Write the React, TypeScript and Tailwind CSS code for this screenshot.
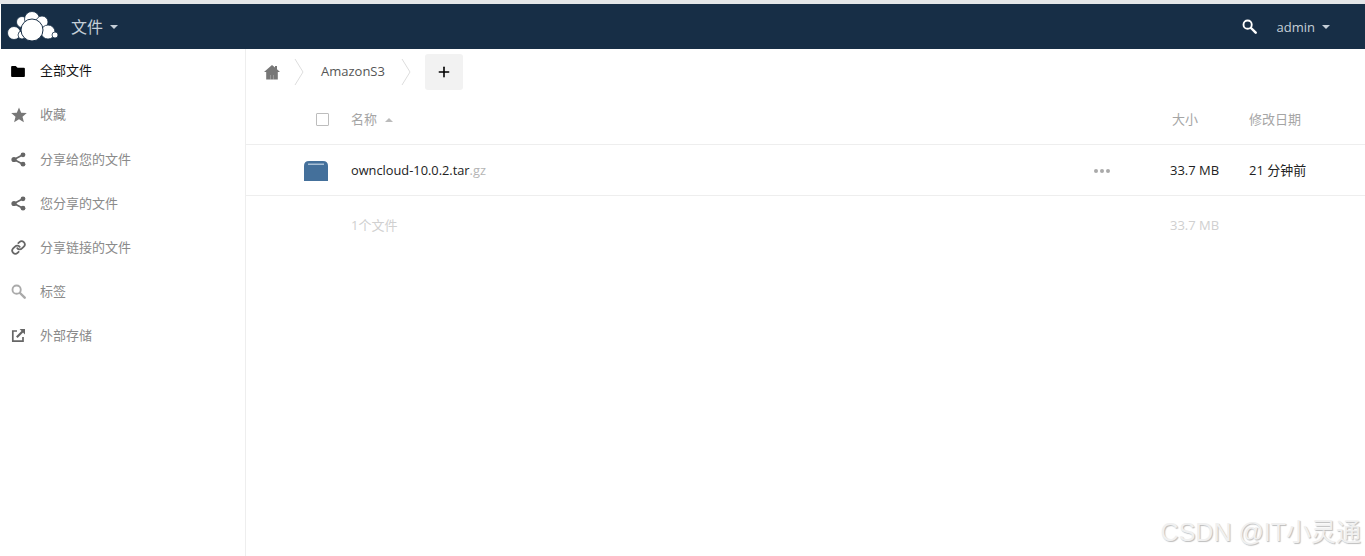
import React from "react";
import { Link as LinkIcon, Plus } from "lucide-react";

const Caret = ({ className }: { className: string }) => (
  <span className={`inline-block h-0 w-0 border-x-[4px] border-x-transparent ${className}`} />
);

const Logo = () => (
  <svg width="52" height="32" viewBox="7 11 52 32" className="block">
    <g fill="#fff" stroke="#172e46" strokeWidth="0.8">
      <circle cx="22" cy="22" r="5.5" />
      <circle cx="32" cy="19" r="7.5" />
      <circle cx="42" cy="22" r="6" />
      <circle cx="14" cy="33" r="6.5" />
      <circle cx="48" cy="32" r="7" />
      <circle cx="55" cy="35" r="3" />
      <circle cx="22" cy="35" r="4" />
      <circle cx="32" cy="30" r="11" strokeWidth="1" />
    </g>
  </svg>
);

const FolderIcon = () => (
  <svg width="14" height="11" viewBox="0 0 15 12" fill="#000">
    <path d="M0 1q0-1 1-1h4l2 2h7q1 0 1 1v8q0 1-1 1H1q-1 0-1-1z" />
  </svg>
);

const StarIcon = () => (
  <svg width="16" height="16" viewBox="0 0 16 16" fill="#777">
    <path d="M8 0.5l2.2 5.2 5.6.4-4.3 3.6 1.4 5.5L8 12.2l-4.9 3 1.4-5.5L.2 6.1l5.6-.4z" />
  </svg>
);

const ShareIcon = () => (
  <svg width="15" height="15" viewBox="0 0 15 15" fill="#666" stroke="#666">
    <path d="M12 2.8L3 7.5l9 4.7" fill="none" strokeWidth="1.7" />
    <circle cx="12" cy="2.8" r="2.4" stroke="none" />
    <circle cx="3" cy="7.5" r="2.6" stroke="none" />
    <circle cx="12" cy="12.2" r="2.4" stroke="none" />
  </svg>
);

const SearchIcon = ({ color, size }: { color: string; size: number }) => (
  <svg width={size} height={size} viewBox="0 0 16 16" fill="none" stroke={color}>
    <circle cx="6" cy="6" r="4.4" strokeWidth="2" />
    <path d="M9.6 9.6l5 5" strokeWidth="2.6" strokeLinecap="round" />
  </svg>
);

const ExternalIcon = () => (
  <svg width="15" height="15" viewBox="0 0 15 15" fill="none" stroke="#666">
    <path d="M6 3H1.8v10.2H12V9" strokeWidth="1.7" />
    <path d="M5.8 9.2L12 3" strokeWidth="2.2" />
    <path d="M8.6 1h5.4v5.4z" fill="#666" stroke="none" />
  </svg>
);

const HomeIcon = () => (
  <svg width="16" height="15" viewBox="0 0 16 15" fill="#777">
    <path d="M8 0l3 2.6V1h2v3.3L16 7h-2.2v7.5H9.5V10h-3v4.5H2.2V7H0z" />
    <path d="M6.5 10h3v4.5h-3z" />
  </svg>
);

const Chevron = ({ className }: { className: string }) => (
  <svg width="10" height="26" viewBox="0 0 10 26" fill="none" stroke="#ddd" className={className}>
    <path d="M1 0l8 13-8 13" />
  </svg>
);

const navItems = [
  { label: "全部文件", icon: <FolderIcon />, active: true },
  { label: "收藏", icon: <StarIcon /> },
  { label: "分享给您的文件", icon: <ShareIcon /> },
  { label: "您分享的文件", icon: <ShareIcon /> },
  { label: "分享链接的文件", icon: <LinkIcon size={15} stroke="#666" strokeWidth={2.8} /> },
  { label: "标签", icon: <SearchIcon color="#aaa" size={15} /> },
  { label: "外部存储", icon: <ExternalIcon /> },
];

export default function App() {
  return (
    <div className="relative flex h-[556px] w-[1365px] flex-col overflow-hidden bg-white pt-[4px] font-['Open_Sans','Noto_Sans_CJK_SC',sans-serif] text-[13px]">
      <div className="absolute inset-x-0 top-0 h-[4px] bg-[#e4e6e8]" />
      <header className="ml-px flex h-[45px] shrink-0 items-center bg-[#172e46] pl-[6px] pr-[35px] text-[#c5ced7]">
        <Logo />
        <span className="ml-[12px] pt-px text-[16px] leading-none">文件</span>
        <Caret className="ml-[7px] border-t-[4px] border-t-[#c5ced7]" />
        <span className="ml-auto">
          <SearchIcon color="#fff" size={15} />
        </span>
        <span className="ml-[20px] pt-[2px] text-[13px] leading-none">admin</span>
        <Caret className="ml-[7px] border-t-[4px] border-t-[#c5ced7]" />
      </header>

      <div className="flex min-h-0 flex-1">
        <nav className="w-[246px] shrink-0 border-r border-[#eeeeee]">
          {navItems.map((item) => (
            <div key={item.label} className="flex h-[44.15px] items-center pl-[11px]">
              <span className="flex w-[29px] shrink-0">{item.icon}</span>
              <span className={`text-[13px] ${item.active ? "text-[#111]" : "text-[#8a8a8a]"}`}>{item.label}</span>
            </div>
          ))}
        </nav>

        <main className="min-w-0 flex-1">
          <div className="flex h-[48px] items-center pb-[2px] pl-[18px]">
            <HomeIcon />
            <Chevron className="ml-[14px]" />
            <span className="ml-[17px] text-[13px] font-medium text-[#555]">AmazonS3</span>
            <Chevron className="ml-[16px]" />
            <button className="ml-[14px] flex h-[36px] w-[38px] items-center justify-center rounded-[3px] bg-[#f2f2f2]">
              <Plus size={16} stroke="#000" strokeWidth={2.4} />
            </button>
          </div>

          <div className="flex h-[48px] items-center border-b border-[#eeeeee] pb-[2px] text-[#a5a5a5]">
            <span className="ml-[70px] h-[13px] w-[13px] rounded-[1px] border border-[#bdbdbd]" />
            <span className="ml-[22px] text-[13px]">名称</span>
            <Caret className="ml-[8px] border-b-[4px] border-b-[#bbb]" />
            <span className="flex-1" />
            <span className="w-[77px] text-[13px]">大小</span>
            <span className="w-[116px] text-[13px]">修改日期</span>
          </div>

          <div className="flex h-[51px] items-center border-b border-[#eeeeee] pt-px">
            <svg width="26" height="22" viewBox="0 0 26 22" className="ml-[57px] shrink-0">
              <path d="M1 6q0-5 5-5h14q5 0 5 5v15H1z" fill="#44709b" />
              <path d="M5 3.5h16v1.5H5z" fill="#a9c0d6" />
            </svg>
            <span className="ml-[22px] flex-1 text-[12.8px] text-[#222]">
              owncloud-10.0.2.tar<span className="text-[#b5b5b5]">.gz</span>
            </span>
            <span className="flex w-[76px] shrink-0 gap-[2px]">
              <i className="h-[4px] w-[4px] rounded-full bg-[#aaa]" />
              <i className="h-[4px] w-[4px] rounded-full bg-[#aaa]" />
              <i className="h-[4px] w-[4px] rounded-full bg-[#aaa]" />
            </span>
            <span className="w-[79px] shrink-0 text-[13px] text-[#222]">33.7 MB</span>
            <span className="w-[116px] shrink-0 text-[13px] text-[#222]">21 分钟前</span>
          </div>

          <div className="flex h-[61px] items-center justify-between pb-[2px] text-[13px] text-[#d0d0d0]">
            <span className="ml-[105px]">1个文件</span>
            <span className="w-[195px]">33.7 MB</span>
          </div>
        </main>
      </div>

      <span className="absolute bottom-[11px] right-[4px] font-['Liberation_Sans','Noto_Sans_CJK_SC',sans-serif] text-[25px] leading-none text-[#f0f0f0] [text-shadow:1px_1px_1px_#bdbdbd]">
        CSDN @IT小灵通
      </span>
    </div>
  );
}
